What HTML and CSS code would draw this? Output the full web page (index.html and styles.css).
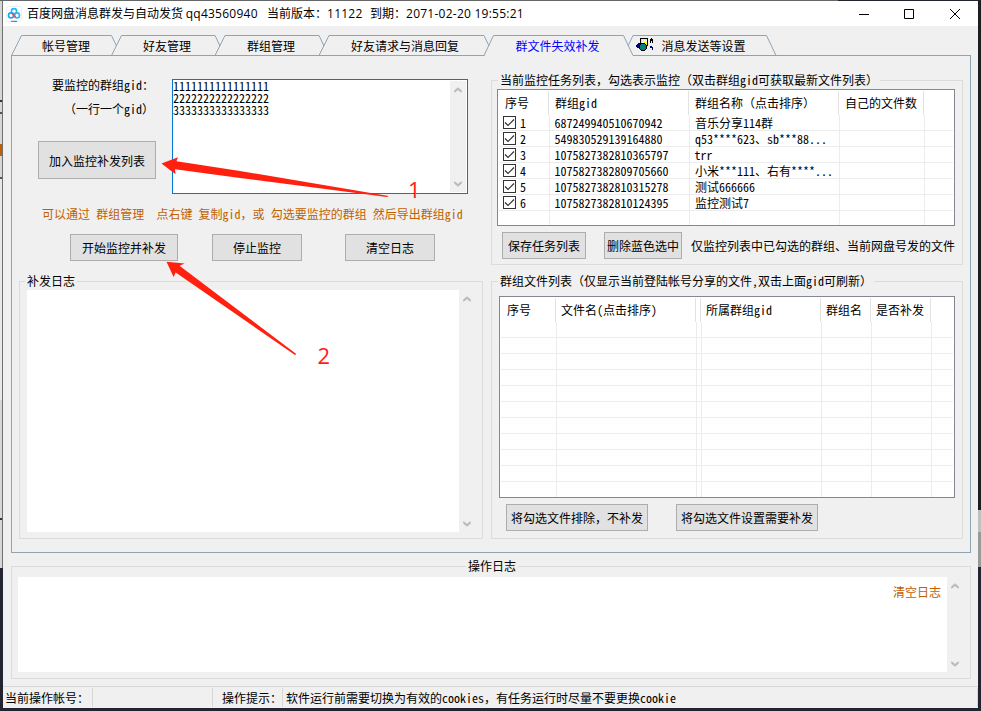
FILE: index.html
```html
<!DOCTYPE html>
<html lang="zh-CN">
<head>
<meta charset="utf-8">
<title>百度网盘消息群发与自动发货</title>
<link rel="stylesheet" href="styles.css">
</head>
<body>
<svg width="0" height="0" class="defs">
  <symbol id="up" viewBox="0 0 8 6"><path d="M0.7 5.2V3.6L4 0.8 7.3 3.6V5.2L4 2.6z" fill="#b8b8b8" stroke="#b8b8b8" stroke-width=".9"/></symbol>
  <symbol id="down" viewBox="0 0 8 6"><path d="M0.7 .8V2.4L4 5.2 7.3 2.4V.8L4 3.4z" fill="#b8b8b8" stroke="#b8b8b8" stroke-width=".9"/></symbol>
  <symbol id="check" viewBox="0 0 13 13"><rect x=".5" y=".5" width="12" height="12" fill="#fff" stroke="#333"/><path d="M2 6.5 5 9.5 11 3.5" fill="none" stroke="#333" stroke-width="1.2"/></symbol>
</svg>
<div class="window">
  <header class="titlebar">
    <svg class="logo" width="16" height="16" viewBox="0 0 16 16" fill="none">
      <rect x=".5" y=".5" width="15" height="15" rx="2" fill="#fff" stroke="#eee"/>
      <circle cx="8" cy="5.2" r="2.600" stroke="#23b8f5" stroke-width="1.6"/>
      <circle cx="5" cy="9.400" r="2.500" stroke="#1ea5f0" stroke-width="1.6"/>
      <circle cx="11" cy="9.400" r="2.500" stroke="#25b9f7" stroke-width="1.6"/>
      <path d="M6.2 7.4 9.5 11" stroke="#f2435a" stroke-width="1.6"/>
      <path d="M5 15.3H8" stroke="#e33"/><path d="M8 15.3H11" stroke="#26e"/>
    </svg>
    <div class="title"><span class="t1">百度网盘消息群发与自动发货 <span class="lat">qq43560940</span></span><span class="t2">当前版本：<span class="lat">11122</span></span><span class="t3">到期：<span class="lat">2071-02-20 19:55:21</span></span></div>
    <svg class="controls" width="104" height="12" viewBox="0 0 104 12" fill="none" stroke="#000">
      <path d="M0 6.5H10M45.500 1.500h9v9h-9zM91 1l10 10M101 1l-10 10"/>
    </svg>
  </header>

  <nav class="tabs">
    <svg class="tab-lines" width="968" height="22" viewBox="0 0 968 22" fill="none" stroke="#8fa3b1">
      <path d="M8.500 20.500 18.500.5H108.500L113.500 11M108.500 20.500 118.500.5H212L217 11M212 20.500 222 .5H316L321 11M316 20.500 326 .5H481L486 11M481 20.500 490.500.5H620.500L630 20.500M625 11 630 .5H763.500L773 20.500"/>
      <path d="M8 20.500H481.500M630 20.500H968"/>
    </svg>
    <span class="tab a">帐号管理</span><span class="tab b">好友管理</span><span class="tab c">群组管理</span><span class="tab d">好友请求与消息回复</span><span class="tab e active">群文件失效补发</span>
    <svg class="tab-icon" width="18" height="14" viewBox="0 0 18 14" shape-rendering="crispEdges">
      <path d="M4 0h8v8H4z"/><path d="M5 1h6v6H5z" fill="#ff0"/><path d="M6 2h1v1H6zM8 2h1v1H8zM10 2h1v1h-1zM7 3h1v1H7zM9 3h1v1H9zM6 4h1v1H6z" fill="#fff"/>
      <path d="M0 7h1V6h1V5h2v6H3v-1H1V9H0z" fill="#000080"/><circle cx="7" cy="9" r="4"/><circle cx="7" cy="9" r="3" fill="#008080"/>
      <path d="M14 1h1V0h1v1h1v4h-1V3h-1v2h-1z"/><path d="M14 8h2v1h1v3h-1v-2h-2z" fill="#000080"/>
    </svg><span class="tab f">消息发送等设置</span>
  </nav>

  <main class="panel">
    <div class="left">
      <div class="entry">
        <div class="entry-side">
          <p>要监控的群组<span class="h">gid</span>：</p>
          <p>（一行一个<span class="h">gid</span>）</p>
          <button class="add">加入监控补发列表</button>
        </div>
        <div class="gids">
          <div class="lines h"><div>1111111111111111</div><div>2222222222222222</div><div>3333333333333333</div></div>
          <div class="scroll"><svg><use href="#up"/></svg><svg><use href="#down"/></svg></div>
        </div>
      </div>
      <p class="hint">可以通过 群组管理  点右键 复制<span class="h">gid</span>，或 勾选要监控的群组 然后导出群组<span class="h">gid</span></p>
      <div class="actions"><button class="w108">开始监控并补发</button><button class="w90">停止监控</button><button class="w90">清空日志</button></div>
      <section class="group log">
        <h2 class="legend">补发日志</h2>
        <div class="logbody"><div class="paper"></div><div class="scroll"><svg><use href="#up"/></svg><svg><use href="#down"/></svg></div></div>
      </section>
    </div>

    <div class="right">
      <section class="group tasks">
        <h2 class="legend">当前监控任务列表，勾选表示监控（双击群组<span class="h">gid</span>可获取最新文件列表）</h2>
        <div class="table t-tasks">
          <div class="head"><span>序号</span><span>群组<span class="h">gid</span></span><span>群组名称（点击排序）</span><span>自己的文件数</span></div>
          <div class="row"><span class="n"><svg><use href="#check"/></svg><b class="h">1</b></span><span class="h">687249940510670942</span><span>音乐分享<span class="h">114</span>群</span><span></span><span></span></div>
          <div class="row"><span class="n"><svg><use href="#check"/></svg><b class="h">2</b></span><span class="h">549830529139164880</span><span><span class="h">q53****623</span>、<span class="h">sb***88...</span></span><span></span><span></span></div>
          <div class="row"><span class="n"><svg><use href="#check"/></svg><b class="h">3</b></span><span class="h">1075827382810365797</span><span class="h">trr</span><span></span><span></span></div>
          <div class="row"><span class="n"><svg><use href="#check"/></svg><b class="h">4</b></span><span class="h">1075827382809705660</span><span>小米<span class="h">***111</span>、右有<span class="h">****...</span></span><span></span><span></span></div>
          <div class="row"><span class="n"><svg><use href="#check"/></svg><b class="h">5</b></span><span class="h">1075827382810315278</span><span>测试<span class="h">666666</span></span><span></span><span></span></div>
          <div class="row"><span class="n"><svg><use href="#check"/></svg><b class="h">6</b></span><span class="h">1075827382810124395</span><span>监控测试<span class="h">7</span></span><span></span><span></span></div>
          <div class="row last"><span></span><span></span><span></span><span></span><span></span></div>
        </div>
        <div class="task-actions"><button class="w84">保存任务列表</button><button class="w78">删除蓝色选中</button><span>仅监控列表中已勾选的群组、当前网盘号发的文件</span></div>
      </section>
      <section class="group files">
        <h2 class="legend">群组文件列表（仅显示当前登陆帐号分享的文件<span class="h">,</span>双击上面<span class="h">gid</span>可刷新）</h2>
        <div class="table t-files">
          <div class="head"><span>序号</span><span>文件名<span class="h">(</span>点击排序<span class="h">)</span></span><span></span><span>所属群组<span class="h">gid</span></span><span>群组名</span><span>是否补发</span></div>
          <div class="row"><span></span><span></span><span></span><span></span><span></span><span></span><span></span></div>
          <div class="row"><span></span><span></span><span></span><span></span><span></span><span></span><span></span></div>
          <div class="row"><span></span><span></span><span></span><span></span><span></span><span></span><span></span></div>
          <div class="row"><span></span><span></span><span></span><span></span><span></span><span></span><span></span></div>
          <div class="row"><span></span><span></span><span></span><span></span><span></span><span></span><span></span></div>
          <div class="row"><span></span><span></span><span></span><span></span><span></span><span></span><span></span></div>
          <div class="row"><span></span><span></span><span></span><span></span><span></span><span></span><span></span></div>
          <div class="row"><span></span><span></span><span></span><span></span><span></span><span></span><span></span></div>
          <div class="row"><span></span><span></span><span></span><span></span><span></span><span></span><span></span></div>
          <div class="row"><span></span><span></span><span></span><span></span><span></span><span></span><span></span></div>
          <div class="row last"><span></span><span></span><span></span><span></span><span></span><span></span><span></span></div>
        </div>
        <div class="file-actions"><button>将勾选文件排除，不补发</button><button>将勾选文件设置需要补发</button></div>
      </section>
    </div>
  </main>

  <section class="group oplog">
    <h2 class="legend">操作日志</h2>
    <div class="logbody"><div class="paper"><span class="clear">清空日志</span></div><div class="scroll"><svg><use href="#up"/></svg><svg><use href="#down"/></svg></div></div>
  </section>

  <footer class="status"><span>当前操作帐号：</span><span></span><span>操作提示：</span><span>软件运行前需要切换为有效的<span class="h">cookies</span>，有任务运行时尽量不要更换<span class="h">cookie</span></span></footer>
</div>

<svg class="notes" width="981" height="711" viewBox="0 0 981 711" fill="#ff2010">
  <path d="M161.500 163.500 178 157.300 176.500 161.200 240 171 388.500 196 387 197 240 178 175 169.300 175.500 174.200z"/>
  <path d="M166.500 261.800 184.700 263.400 179.500 265.800 296.300 354 295 355 175.700 272.500 173.600 277z"/>
  <text x="408" y="198">1</text>
  <text x="317.500" y="364">2</text>
</svg>
</body>
</html>
```

FILE: styles.css
```css
* { box-sizing: border-box; }
html { height: 711px; overflow: hidden; }
body {
  margin: 0;
  width: 981px;
  height: 711px;
  padding: 1px 3px 3px;
  overflow: hidden;
  position: relative;
  font: 12px/16px "Noto Sans CJK SC", sans-serif;
  color: #000;
  text-spacing-trim: space-all;
  background:
    linear-gradient(90deg, #666 838px, #20242c 838px) 0 0 / 100% 1px no-repeat,
    linear-gradient(#707070, #707070) 2px 0 / 1px 568px no-repeat,
    linear-gradient(#d6d6d6 100px, #333 100px 102px, #d6d6d6 102px 112px, #555 112px 114px, #d6d6d6 114px 144px, #c06000 144px 156px, #d6d6d6 156px 177px, #555 177px 179px, #e8e8e8 179px 400px, #d6d6d6 400px 518px, #333 518px 520px, #d6d6d6 520px 568px, #22252f 568px) 0 0 / 3px 100% no-repeat,
    linear-gradient(#1d1e1f 510px, #c0c0c0 510px 532px, #999 532px 567px, #22252f 567px) 978px 0 / 3px 100% no-repeat,
    #22252f;
}
p, h2 { margin: 0; font-size: 12px; font-weight: 400; white-space: nowrap; }
.defs { position: absolute; }
.h { font-feature-settings: "hwid"; font-weight: 400; }
.window { height: 707px; background: #f0f0f0; display: flex; flex-direction: column; white-space: nowrap; }

.titlebar { height: 25px; flex: none; background: #fff; display: flex; align-items: center; padding: 0 15px 0 3px; }
.title { display: flex; margin: -1px 0 0 5px; }
.t1 { width: 240px; }
.t2 { width: 103px; }
.lat { font-family: "Open Sans", "Noto Sans", sans-serif; letter-spacing: .25px; }
.controls { margin-left: auto; }

.tabs { height: 29px; flex: none; position: relative; display: flex; align-items: flex-start; padding-top: 12px; }
.tab-lines { position: absolute; left: 0; top: 9px; }
.tab.a { margin-left: 39px; width: 101px; }
.tab.b { width: 104px; }
.tab.c { width: 104px; }
.tab.d { width: 164.500px; }
.tab.e { width: 120px; }
.tab-icon { margin: 0 8px 0 0; }
.active { color: #00f; }

.panel { margin: 0 7px 0 8px; height: 498px; flex: none; border: 1px solid #8fa3b1; border-top: 0; display: flex; padding-left: 7px; }
.left { width: 464px; display: flex; flex-direction: column; }
.right { width: 472px; margin-left: 8px; display: flex; flex-direction: column; }

.entry { display: flex; margin-top: 24px; height: 115px; }
.entry-side { width: 153px; padding-right: 18px; margin-top: -2px; display: flex; flex-direction: column; align-items: flex-end; }
.entry-side p { height: 24px; }
button { font: inherit; height: 27px; padding: 1px 0 0; border: 1px solid #adadad; background: #e1e1e1; color: #000; text-align: center; white-space: nowrap; }
.add { width: 118px; height: 38px; padding-top: 2px; margin: 16px -2px 0 0; flex: none; }
.gids { width: 296px; background: #fff; border: 1px solid #0078d7; padding: 1px 1px 1px 0; display: flex; justify-content: space-between; }
.lines { line-height: 12px; margin-top: -1px; }
.scroll { width: 16px; display: flex; flex-direction: column; align-items: center; justify-content: space-between; padding: 6px 0 5px; background: #f0f0f0; }
.scroll svg { width: 8px; height: 6px; display: block; }
.logbody .scroll { width: 15px; }
.hint { color: #c06000; margin: 12px 0 0 23px; white-space: pre; word-spacing: 3.450px; }
.actions { display: flex; margin: 12px 0 0 51px; height: 28px; }
.w108 { width: 108px; margin-right: 34px; }
.w90 { width: 90px; margin-right: 43px; }

.group { border: 1px solid #dcdcdc; display: flex; flex-direction: column; }
.legend { align-self: flex-start; flex: none; height: 16px; padding: 0 2px; margin: -9px 0 0 5px; background: #f0f0f0; }
.log { margin-top: 19px; height: 258px; }
.logbody { display: flex; flex: none; }
.paper { background: #fff; }
.log .logbody { margin: 1px 0 0 7px; height: 242px; }
.log .paper { width: 432px; }

.tasks { margin-top: 25px; height: 185px; }
.tasks .legend, .files .legend { margin-left: 6px; }
.table { border: 1px solid #828790; background: #fff; padding: 0 1px; flex: none; overflow: hidden; }
.t-tasks { width: 458px; height: 137px; margin: 1px 0 0 5px; }
.t-files { width: 456px; height: 202px; margin: 7px 0 0 7px; }
.head, .row { display: grid; }
.t-tasks .head, .t-tasks .row { grid-template-columns: 51px 140px 150px 85px 1fr; }
.t-files .head, .t-files .row { grid-template-columns: 56px 140px 5px 120px 50px 60px 1fr; }
.head { height: 24px; margin: 1px 0 0 -1px; }
.head > span { border-right: 1px solid #e2e2e2; padding: 4px 0 0 7px; }
.head > span:nth-child(n+2) { padding-left: 6px; }
.t-files .head > span:nth-child(n+2) { padding-left: 5px; }
.t-files .head > span:nth-child(3) { padding: 0; }
.row { height: 16px; border-bottom: 1px solid #ececec; line-height: 16px; }
.row.last { border-bottom: 0; }
.row > span { border-right: 1px solid #ececec; padding-left: 5px; height: 15px; }
.row > span.h { padding-left: 4.500px; }
.row > span:last-child { border-right: 0; }
.t-files .row > span { padding: 0; }
.row .n { display: flex; padding-left: 4px; }
.n svg { width: 13px; height: 13px; margin: 1px 4px 0 0; }
.task-actions { display: flex; align-items: center; margin: 6px 0 0 10px; }
.task-actions span { margin: 1px 0 0 9px; }
.w84 { width: 84px; margin-right: 18px; }
.w78 { width: 78px; }
.files { margin-top: 16px; height: 258px; }
.file-actions { display: flex; gap: 28px; margin: 6px 0 0 14px; }
.file-actions button { width: 142px; }

.oplog { margin: 13px 7px 0 8px; height: 113px; flex: none; }
.oplog .legend { margin-left: 454px; }
.oplog .logbody { margin: 3px 0 0 6px; height: 95px; }
.oplog .paper { width: 929px; text-align: right; padding: 7px 6px 0 0; }
.clear { color: #c06000; }

.status { margin-top: 7px; border-top: 1px solid #d7d7d7; flex: 1; display: flex; padding-top: 1px; }
.status > span { border-right: 1px solid #d7d7d7; padding: 2px 0 0 2px; height: 19px; }
.status > span:nth-child(1) { width: 90px; }
.status > span:nth-child(2) { width: 120px; }
.status > span:nth-child(3) { width: 70px; padding-left: 9px; }
.status > span:nth-child(4) { flex: 1; padding-left: 3px; }

.notes { position: absolute; left: 0; top: 0; pointer-events: none; }
.notes text { font: 22px "Open Sans", "Noto Sans", sans-serif; }
```
